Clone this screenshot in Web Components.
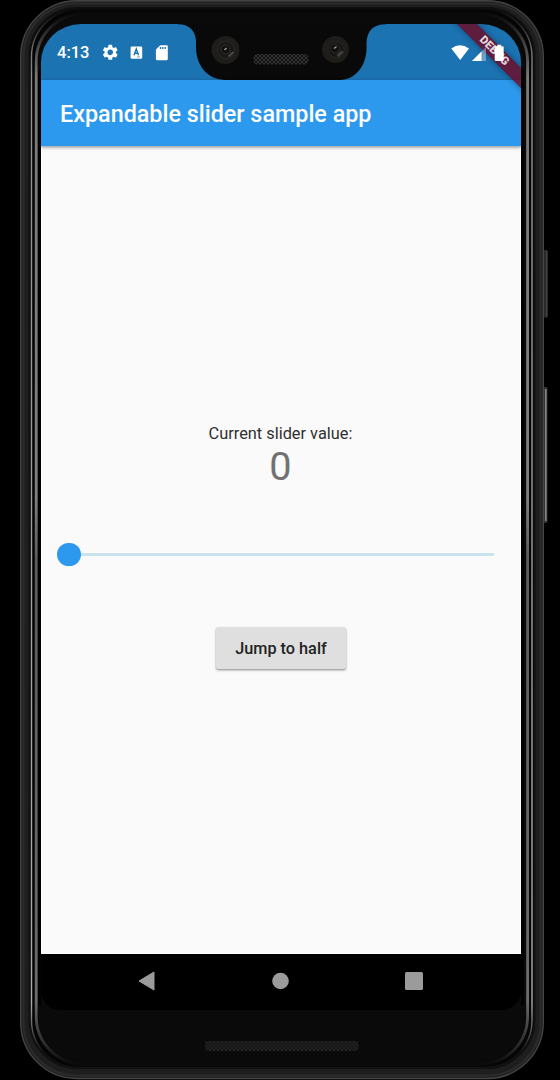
<!DOCTYPE html>
<html lang="en">
<head>
<meta charset="utf-8">
<title>Expandable slider sample app</title>
<style>
html,body{margin:0;background:#000}
body{width:560px;height:1080px;overflow:hidden;font-family:Roboto,"Liberation Sans",sans-serif}
</style>
</head>
<body>
<phone-device>
  <status-bar slot="screen" time="4:13"></status-bar>
  <app-bar slot="screen">Expandable slider sample app</app-bar>
  <app-content slot="screen">
    <slider-value value="0">Current slider value:</slider-value>
    <expandable-slider></expandable-slider>
    <raised-button>Jump to half</raised-button>
  </app-content>
  <nav-bar slot="screen"></nav-bar>
  <debug-banner slot="overlay">DEBUG</debug-banner>
</phone-device>
<script>
const define = (name, html, setup) => customElements.define(name, class extends HTMLElement {
  constructor() {
    super();
    const root = this.attachShadow({mode: 'open'});
    root.innerHTML = html;
    if (setup) setup(this, root);
  }
});

define('phone-device', `
<style>
:host{display:grid;width:560px;height:1080px;overflow:hidden;background:#000}
.frame,.body{grid-area:1/1}
.frame{display:block}
.body{box-sizing:border-box;padding:24px 39px 70px 41px;position:relative}
.screen{position:relative;display:flex;flex-direction:column;width:480px;height:986px;border-radius:40px 40px 20px 20px/38px 38px 20px 20px;overflow:hidden;background:#000}
.notch{position:absolute;left:137px;top:-1px}
.overlay{position:absolute;right:0;top:0;z-index:2}
</style>
<svg class="frame" width="560" height="1080" viewBox="0 0 560 1080">
  <defs>
    <linearGradient id="edge" x1="0" y1="0" x2="0" y2="1">
      <stop offset="0" stop-color="#0a0a0a"/><stop offset=".01" stop-color="#1a1a1a"/><stop offset=".03" stop-color="#444"/><stop offset=".06" stop-color="#7a7a7a"/>
      <stop offset=".46" stop-color="#808080"/><stop offset=".52" stop-color="#5c5c5c"/><stop offset=".94" stop-color="#6c6c6c"/>
      <stop offset=".97" stop-color="#3a3a3a"/><stop offset=".99" stop-color="#1c1c1c"/><stop offset="1" stop-color="#0a0a0a"/>
    </linearGradient>
    <linearGradient id="rim" x1="0" y1="0" x2="0" y2="1">
      <stop offset="0" stop-color="#090909"/><stop offset=".015" stop-color="#2a2a2a"/><stop offset=".04" stop-color="#777"/><stop offset=".07" stop-color="#909090"/>
      <stop offset=".94" stop-color="#aaa"/><stop offset=".965" stop-color="#555"/><stop offset=".985" stop-color="#121212"/>
    </linearGradient>
    <linearGradient id="key" x1="0" y1="0" x2="1" y2="0"><stop offset="0" stop-color="#202020"/><stop offset=".7" stop-color="#2c2c2c"/><stop offset="1" stop-color="#555"/></linearGradient>
    <pattern id="mesh" width="4" height="4" patternUnits="userSpaceOnUse"><rect width="4" height="4" fill="#151515"/><path d="M0 0l2 2 2-2M0 4l2-2 2 2" stroke="#242424" fill="none" stroke-width=".9"/></pattern>
  </defs>
  <rect x="541" y="250" width="6.5" height="67.500" rx="1.500" fill="url(#key)"/>
  <rect x="541" y="387" width="6.500" height="136" rx="1.500" fill="#333"/>
  <path d="M545.800 389V521" stroke="#888" stroke-width="1.500"/>
  <rect x="20.700" y=".7" width="522.600" height="1077.800" rx="56" fill="#202020" stroke="#434343" stroke-width="1.400"/>
  <rect x="23.500" y="3.500" width="517" height="1072" rx="53" fill="#1e1e1e" stroke="#2b2b2b" stroke-width="2"/>
  <rect x="29.500" y="8" width="505" height="1060" rx="48" fill="#080808" stroke="#101010" stroke-width="2"/>
  <rect x="31.500" y="9.500" width="500.500" height="1058" rx="47" fill="#050505" stroke="url(#rim)" stroke-width="1.400"/>
  <rect x="36.200" y="13.500" width="491.400" height="1051" rx="48" fill="#0a0a0a" stroke="url(#edge)" stroke-width="2.800"/>
  <rect x="38.500" y="16" width="486" height="1046" rx="46" fill="#0a0a0a"/>
  <path d="M39.500 70V1005M522.500 70V1005" stroke="#000" stroke-width="2.500"/>
  <rect x="205" y="1041" width="153.500" height="10" rx="3" fill="url(#mesh)"/>
</svg>
<div class="body">
  <div class="screen">
    <slot name="screen"></slot>
    <svg class="notch" width="208" height="58" viewBox="178 23 208 58">
      <path d="M178 23V24.300C190 24.300 196 32 196 42V47C196 66 208 80 226 80H340C355 80 366.500 66 366.500 48V43C367 31 373 24.300 386 24.300V23Z" fill="#090909"/>
      <defs><pattern id="holes" width="4" height="4" patternUnits="userSpaceOnUse"><rect width="4" height="4" fill="#111"/><path d="M0 0l2 2 2-2M0 4l2-2 2 2" stroke="#343434" fill="none"/></pattern></defs>
      <circle cx="225.500" cy="50" r="14" fill="#1f1d1a"/><circle cx="226" cy="50" r="8.500" fill="#191818" stroke="#2b2927" stroke-width="1"/><circle cx="225.500" cy="49.500" r="4.500" fill="#111010" stroke="#34302f"/><path d="M224.500 50l2-2" stroke="#a8949a" stroke-width="1.500"/><path d="M228.500 56.500l5-4.500" stroke="#4a4947" stroke-width="2"/>
      <circle cx="335.500" cy="49.500" r="13.500" fill="#1f1d1a"/><circle cx="336" cy="49.500" r="8" fill="#171616" stroke="#282624"/><circle cx="335" cy="48.500" r="4.500" fill="#111010" stroke="#302d2c"/><path d="M334 48.500l2.500-2" stroke="#a09195" stroke-width="1.500"/><path d="M337.500 56l5-4.500" stroke="#42413f" stroke-width="3"/>
      <rect x="253.500" y="54" width="55" height="10.500" rx="4" fill="url(#holes)"/>
    </svg>
    <div class="overlay"><slot name="overlay"></slot></div>
  </div>
</div>`);

define('status-bar', `
<style>
:host{display:flex;box-sizing:border-box;height:56px;flex:none;align-items:center;background:#1c73b2;color:#fff;padding:1px 12px 0 16px;font-size:16.500px;font-weight:500}
.time{width:45px}
.left{display:flex;align-items:center}
.right{margin-left:auto;display:flex;align-items:center;position:relative;z-index:3}
svg{display:block}
</style>
<span class="time"></span>
<div class="left">
<svg width="52" height="18" viewBox="0 0 52 18" fill="#fff">
  <path transform="translate(-1.100 -1) scale(.78)" d="M19.140 12.940c.04-.3.060-.61.060-.94 0-.32-.02-.64-.07-.94l2.030-1.580a.49.490 0 0 0 .12-.61l-1.920-3.320a.488.488 0 0 0-.59-.22l-2.390.96c-.5-.38-1.030-.7-1.620-.94l-.36-2.540a.484.484 0 0 0-.48-.41h-3.840c-.24 0-.43.170-.47.410l-.36 2.540c-.59.240-1.130.57-1.620.94l-2.390-.96c-.22-.08-.47 0-.59.220L2.740 8.870c-.12.210-.08.470.120.610l2.030 1.580c-.05.3-.09.63-.09.940s.02.64.070.94l-2.030 1.580a.49.490 0 0 0-.12.610l1.920 3.320c.12.220.37.290.59.220l2.390-.96c.5.38 1.030.7 1.620.94l.36 2.540c.05.240.24.410.480.410h3.840c.24 0 .44-.17.470-.41l.36-2.540c.59-.24 1.130-.56 1.620-.94l2.390.96c.22.080.47 0 .59-.22l1.920-3.320c.12-.22.070-.47-.12-.61l-2.010-1.580zM12 15.600A3.610 3.610 0 0 1 8.400 12c0-1.980 1.620-3.600 3.600-3.600s3.600 1.620 3.600 3.600-1.620 3.600-3.600 3.600z"/>
  <rect x="28.600" y="2.400" width="11.600" height="12.400" rx="1.300"/>
  <path d="M32 11.300l2.300-6.300 2.300 6.300M33 9.300h2.800" fill="none" stroke="#1c73b2" stroke-width="1.400"/><path d="M35 12.900h3" stroke="#1c73b2" opacity=".6"/>
</svg>
<svg width="14" height="18" viewBox="0 0 14 18" style="margin-left:1px"><path d="M5.300 1.200h6.200q1.300 0 1.300 1.300v12.300q0 1.500-1.400 1.500H2.200Q.9 16.300.9 14.800V5.500z" fill="#fff"/><path d="M5.500 2.900v2.200M7.800 2.900v2.200M10.100 2.900v2.200" stroke="#1c73b2" stroke-width="1.300"/></svg>
</div>
<div class="right">
<svg width="58" height="18" viewBox="451 43 58 18" fill="#fff">
  <path d="M451.300 47.500Q460 41 469 47.500L460.200 59z"/>
  <path d="M486 46V60H472z" opacity=".35"/><path d="M481.500 50.500V60H472z"/>
  <path d="M495.500 45.300h1.700v-1.500h4v1.500h1.500q1 0 1 1V59q0 1-1 1h-7q-1 0-1-1V46.300q0-1 .8-1z"/>
</svg>
</div>`, (el, root) => { root.querySelector('.time').textContent = el.getAttribute('time'); });

define('app-bar', `
<style>
:host{display:flex;box-sizing:border-box;height:66px;flex:none;align-items:center;background:#2c99ee;color:#fff;padding:2px 19px 0;font-size:23.350px;font-weight:500;white-space:nowrap;position:relative;z-index:1;box-shadow:0 1px 3px rgba(0,0,0,.35),0 2px 4px rgba(0,0,0,.12)}
</style><span><slot></slot></span>`);

define('app-content', `
<style>
:host{display:flex;box-sizing:border-box;height:807.500px;flex:none;flex-direction:column;align-items:center;background:#fafafa;padding-top:278px;border:solid #fff;border-width:0 1px 1px}
</style><slot></slot>`);

define('slider-value', `
<style>
:host{display:flex;flex-direction:column;align-items:center;width:100%;color:#303030;font-size:16.350px;line-height:20px}
.label{margin-right:1px}
.num{margin-right:1px;color:#717171;font-size:39.700px;line-height:46px}
</style><span class="label"><slot></slot></span><span class="num"></span>`, (el, root) => { root.querySelector('.num').textContent = el.getAttribute('value'); });

define('expandable-slider', `
<style>
:host{display:flex;align-items:center;align-self:stretch;height:25px;margin:52px 26px 0 15px}
.thumb{width:23.500px;height:23.500px;border-radius:50%;background:#2c99ee;flex:none}
.track{flex:1;height:2.400px;background:#c9e3ee}
</style><div class="thumb"></div><div class="track"></div>`);

define('raised-button', `
<style>
:host{display:flex;box-sizing:border-box;width:130px;height:42px;margin:60px 0 0;align-items:center;justify-content:center;background:#dfdfdf;border-radius:2.500px;color:#232323;font-size:16.250px;font-weight:500;white-space:nowrap;box-shadow:0 1px 2px rgba(0,0,0,.35),0 2px 3px rgba(0,0,0,.1)}
</style><span><slot></slot></span>`);

define('nav-bar', `
<style>
:host{display:flex;flex:1;align-items:center;justify-content:space-between;background:#000;padding:0 98.500px 1px 97px}
svg{display:block}
</style>
<svg width="17" height="20" viewBox="0 0 17 20"><path d="M16 1v18L1 10z" fill="#9b9b9b" stroke="#9b9b9b" stroke-linejoin="round"/></svg>
<svg width="18" height="18" viewBox="0 0 18 18"><circle cx="9.500" cy="9" r="8.300" fill="#9b9b9b"/></svg>
<svg width="18" height="18" viewBox="0 0 18 18"><rect width="18" height="18" rx="1.500" fill="#9b9b9b"/></svg>`);

define('debug-banner', `
<style>
:host{display:block;position:relative;width:80px;height:80px;overflow:hidden;pointer-events:none}
.band{position:absolute;left:-7.500px;top:20px;width:120px;height:14px;transform:rotate(45deg);display:flex;align-items:center;justify-content:center;background:rgba(108,8,38,.82);color:#e3d5dc;font-size:11.300px;font-weight:900;line-height:14px;box-shadow:0 0 6px rgba(0,0,0,.4)}
</style><div class="band"><slot></slot></div>`);
</script>
</body>
</html>
